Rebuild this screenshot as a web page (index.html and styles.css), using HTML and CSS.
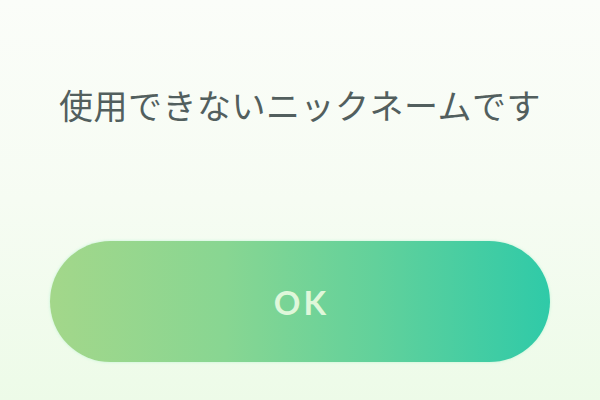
FILE: index.html
```html
<!DOCTYPE html>
<html lang="ja">
<head>
<meta charset="utf-8">
<link rel="stylesheet" href="styles.css">
</head>
<body>
<div class="dialog">
  <p class="message">使用できないニックネームです</p>
  <button class="ok">OK</button>
</div>
</body>
</html>
```
FILE: styles.css
```css
html, body {
  margin: 0;
  padding: 0;
  width: 600px;
  height: 400px;
  overflow: hidden;
}
body {
  background: linear-gradient(180deg, #fbfdf9 0%, #f6fcf3 50%, #edfbe8 100%);
  font-family: "Noto Sans CJK JP", "Noto Sans", sans-serif;
}
.dialog {
  display: flex;
  flex-direction: column;
  align-items: center;
  padding-top: 84px;
}
.message {
  margin: 0;
  font-size: 34px;
  line-height: 42px;
  color: #525f5e;
  letter-spacing: 0.5px;
}
.ok {
  margin-top: 115px;
  width: 500px;
  height: 121px;
  border: none;
  border-radius: 61px;
  background: linear-gradient(90deg, #a3d78a 0%, #88d692 35%, #62d19b 65%, #2fcaa8 100%);
  box-shadow: 0 0 3px rgba(160, 240, 200, 0.6);
  color: #dff7da;
  font-family: "Lato", "Noto Sans", sans-serif;
  font-weight: 700;
  font-size: 33px;
  letter-spacing: 3px;
  padding: 0 0 0 3px;
}
```
